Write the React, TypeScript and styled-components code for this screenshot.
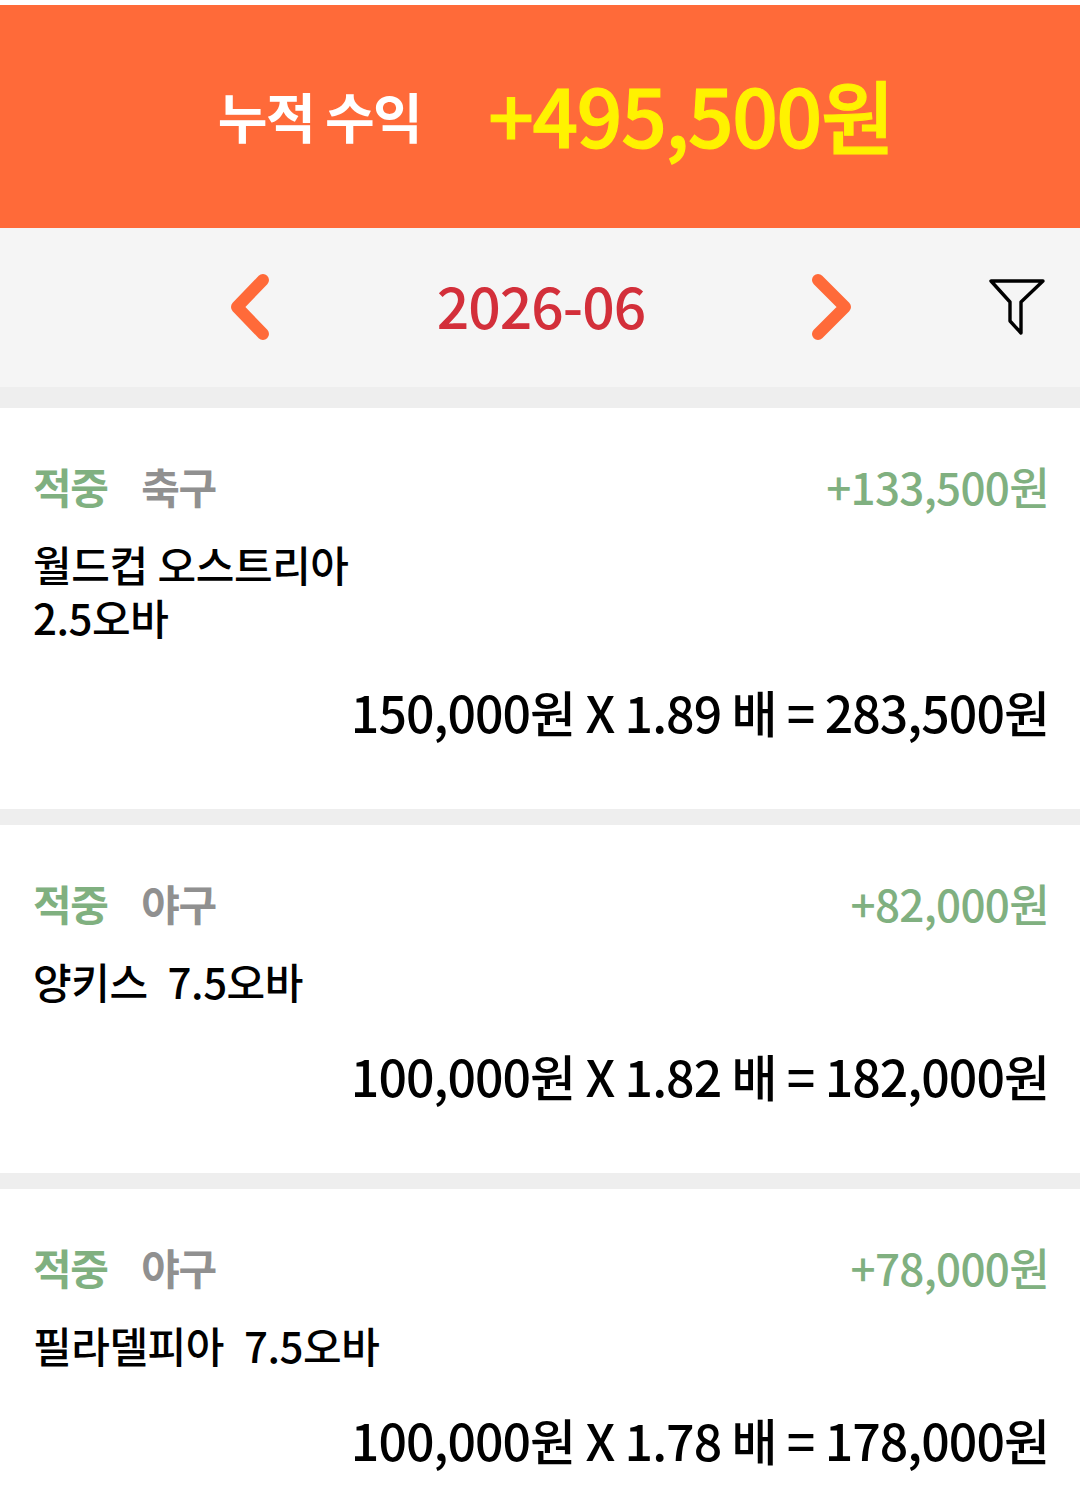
import React from "react";
import styled, { createGlobalStyle } from "styled-components";

const Global = createGlobalStyle`
  html, body { margin: 0; padding: 0; background: #fff; }
  body { font-family: "Noto Sans CJK KR", "Noto Sans", sans-serif; }
`;
const Page = styled.div`
  width: 1080px; height: 1512px; overflow: hidden; background: #eee; padding-top: 5px; box-sizing: border-box;
  box-shadow: inset 0 5px 0 #fff;
`;
const Summary = styled.header`
  height: 223px; background: #ff6a39; display: flex; align-items: center; justify-content: center; gap: 67px; padding: 0 0 6px 31px; box-sizing: border-box;
`;
const SummaryLabel = styled.span`
  font-size: 54px; font-weight: 700; color: #fff; letter-spacing: -1.5px; line-height: 1; margin-top: 4px;
`;
const SummaryValue = styled.span`
  font-size: 80px; font-weight: 500; color: #fff200; -webkit-text-stroke: 1.2px #fff200; letter-spacing: -1.3px; line-height: 1; margin-top: -2px;
`;
const MonthBar = styled.nav`
  height: 159px; background: #f5f5f5; position: relative; display: flex; align-items: center; justify-content: center; gap: 0; margin-bottom: 21px; padding: 0 0 2px 2px; box-sizing: border-box;
`;
const Month = styled.span`
  font-size: 57px; color: #d32f3a; font-weight: 500; letter-spacing: -1px; width: 537px; text-align: center; line-height: 1; padding-bottom: 4px;
`;
const Arrow = styled.svg`
  width: 42px; height: 68px; flex: none; display: block;
`;
const FilterIcon = styled.svg`
  position: absolute; right: 35px; top: 49px; width: 56px; height: 60px;
`;
const Card = styled.article<{ $height: number }>`
  background: #fff; height: ${p => p.$height}px; margin-bottom: 16px; padding: 50px 32px 0 33px; box-sizing: border-box;
`;
const TopRow = styled.div`
  display: flex; align-items: center; height: 56px;
`;
const Status = styled.span`
  font-size: 42px; font-weight: 700; color: #80b080; letter-spacing: -1.5px; line-height: 1;
`;
const Sport = styled.span`
  font-size: 42px; font-weight: 700; color: #909090; letter-spacing: -1.5px; margin-left: 34px; line-height: 1;
`;
const Profit = styled.span`
  margin-left: auto; font-size: 44px; color: #80b080; font-weight: 500; letter-spacing: -0.7px; line-height: 1; margin-right: -1px;
`;
const Title = styled.div`
  margin-top: 23px; font-size: 42px; line-height: 53px; font-weight: 500; color: #000; letter-spacing: -0.45px; word-spacing: 1px; white-space: pre-wrap;
`;
const Calc = styled.div`
  margin-top: 38px; margin-right: -1px; text-align: right; font-size: 50px; color: #000; font-weight: 500; letter-spacing: -0.95px; line-height: 60px;
`;

const items = [
  { height: 401, sport: "축구", profit: "+133,500원", title: "월드컵 오스트리아\n2.5오바", calc: "150,000원 X 1.89 배 = 283,500원" },
  { height: 348, sport: "야구", profit: "+82,000원", title: "양키스  7.5오바", calc: "100,000원 X 1.82 배 = 182,000원" },
  { height: 348, sport: "야구", profit: "+78,000원", title: "필라델피아  7.5오바", calc: "100,000원 X 1.78 배 = 178,000원" },
];

export default function App() {
  return (
    <Page>
      <Global />
      <Summary>
        <SummaryLabel>누적 수익</SummaryLabel>
        <SummaryValue>+495,500원</SummaryValue>
      </Summary>
      <MonthBar>
        <Arrow viewBox="0 0 42 68">
          <path d="M32 7 L6 34 L32 61" fill="none" stroke="#ff6a39" strokeWidth="12" strokeLinecap="round" strokeLinejoin="round" />
        </Arrow>
        <Month>2026-06</Month>
        <Arrow viewBox="0 0 42 68">
          <path d="M8 7 L35 34 L8 61" fill="none" stroke="#ff6a39" strokeWidth="12" strokeLinecap="round" strokeLinejoin="round" />
        </Arrow>
        <FilterIcon viewBox="0 0 56 60">
          <path d="M2 4 H54 L32 25 V56 L21 44 V25 Z" fill="none" stroke="#000" strokeWidth="3.4" strokeLinejoin="round" />
        </FilterIcon>
      </MonthBar>
      {items.map(it => (
        <Card key={it.calc} $height={it.height}>
          <TopRow>
            <Status>적중</Status>
            <Sport>{it.sport}</Sport>
            <Profit>{it.profit}</Profit>
          </TopRow>
          <Title>{it.title}</Title>
          <Calc>{it.calc}</Calc>
        </Card>
      ))}
    </Page>
  );
}
